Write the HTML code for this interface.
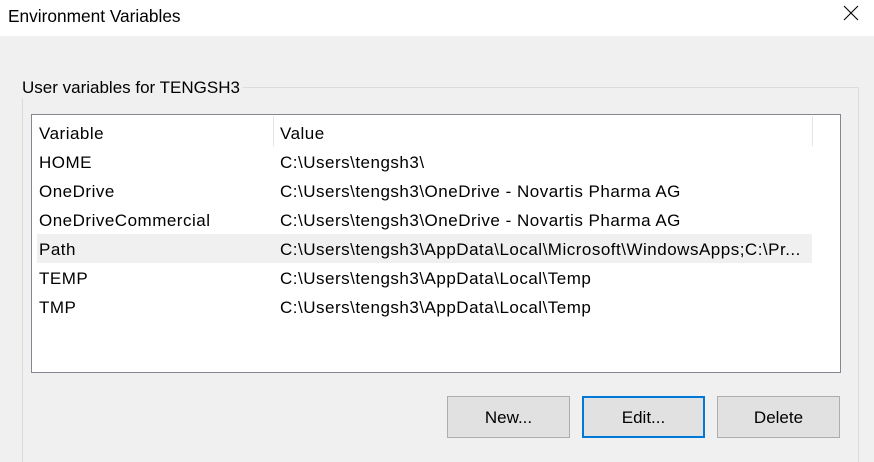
<!DOCTYPE html>
<html><head><style>
*{margin:0;padding:0;box-sizing:border-box}
html,body{width:874px;height:462px;overflow:hidden}
body{background:#f0f0f0;font-family:"Liberation Sans",sans-serif;font-size:17px;color:#000;position:relative}
.t{position:absolute;white-space:nowrap}
#title{position:absolute;left:0;top:0;width:874px;height:36px;background:#fff}
#grp{position:absolute;left:22px;top:87px;width:837px;height:375px;border:1px solid #dcdcdc;border-bottom:none}
#gl{position:absolute;left:19px;top:78px;background:#f0f0f0;padding:0 3px;font-size:17px}
#list{position:absolute;left:31px;top:114px;width:810px;height:259px;background:#fff;border:1px solid #828790}
.row{position:absolute;left:5px;width:775px;height:29px}
.row span{position:absolute;top:6px;white-space:nowrap;letter-spacing:0.5px}
.btn{position:absolute;top:396px;width:123px;height:42px;background:#e1e1e1;border:1px solid #adadad;text-align:center;line-height:42px;font-size:17px}
</style></head><body>
<div id="title"></div>
<div class="t" style="left:8px;top:6px;font-size:17.3px">Environment Variables</div>
<svg style="position:absolute;left:843px;top:5px" width="16" height="16"><path d="M1 1L15 15M15 1L1 15" stroke="#000" stroke-width="1.1"/></svg>
<div id="grp"></div>
<div id="gl" class="t">User variables for TENGSH3</div>
<div id="list">
 <div style="position:absolute;left:241px;top:1px;width:1px;height:30px;background:#e5e5e5"></div>
 <div style="position:absolute;left:780px;top:1px;width:1px;height:30px;background:#e5e5e5"></div>
 <div class="row" style="top:3px"><span style="left:2px">Variable</span><span style="left:243px">Value</span></div>
 <div class="row" style="top:32px"><span style="left:2px">HOME</span><span style="left:243px">C:\Users\tengsh3\</span></div>
 <div class="row" style="top:61px"><span style="left:2px">OneDrive</span><span style="left:243px">C:\Users\tengsh3\OneDrive - Novartis Pharma AG</span></div>
 <div class="row" style="top:90px"><span style="left:2px">OneDriveCommercial</span><span style="left:243px">C:\Users\tengsh3\OneDrive - Novartis Pharma AG</span></div>
 <div class="row" style="top:119px;background:#f0f0f0"><span style="left:2px">Path</span><span style="left:243px">C:\Users\tengsh3\AppData\Local\Microsoft\WindowsApps;C:\Pr...</span></div>
 <div class="row" style="top:148px"><span style="left:2px">TEMP</span><span style="left:243px">C:\Users\tengsh3\AppData\Local\Temp</span></div>
 <div class="row" style="top:177px"><span style="left:2px">TMP</span><span style="left:243px">C:\Users\tengsh3\AppData\Local\Temp</span></div>
</div>
<div class="btn" style="left:447px">New...</div>
<div class="btn" style="left:582px;border:2px solid #0078d7;line-height:40px">Edit...</div>
<div class="btn" style="left:717px">Delete</div>
</body></html>
